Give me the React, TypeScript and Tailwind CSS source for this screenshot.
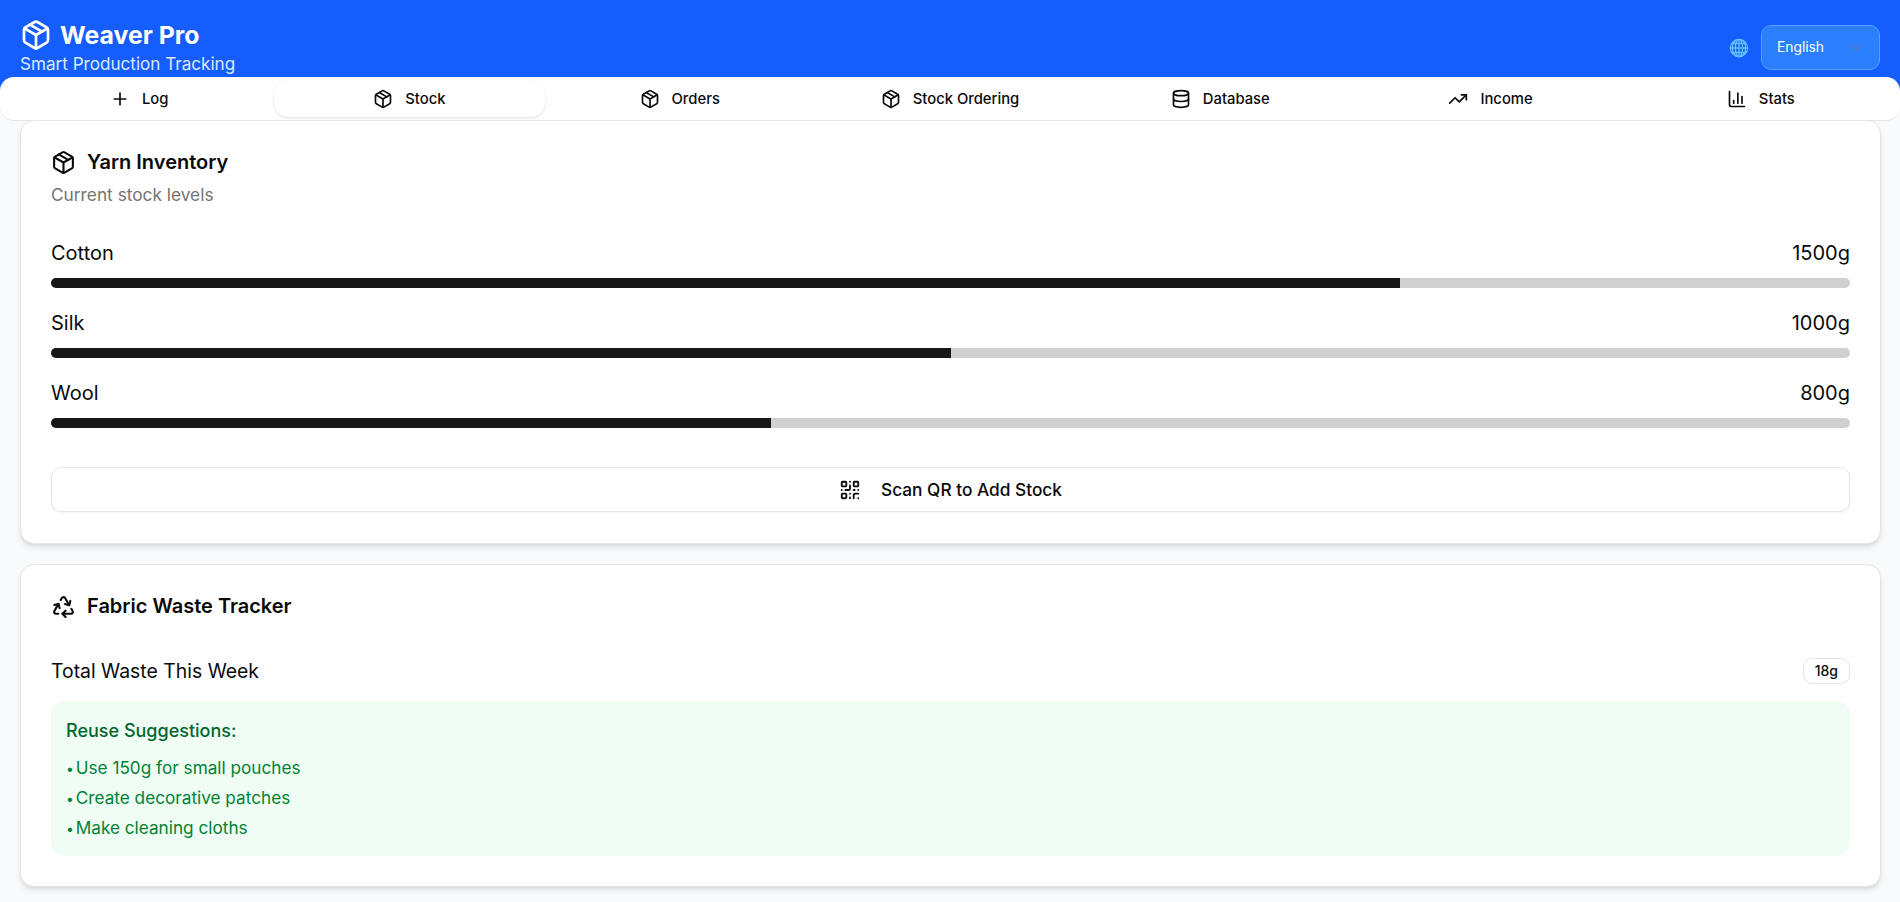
import { BarChart3, Database, ChevronDown, Package, Plus, QrCode, Recycle, TrendingUp } from 'lucide-react';

const tabs = [
  { label: 'Log', icon: Plus },
  { label: 'Stock', icon: Package, active: true },
  { label: 'Orders', icon: Package },
  { label: 'Stock Ordering', icon: Package },
  { label: 'Database', icon: Database },
  { label: 'Income', icon: TrendingUp },
  { label: 'Stats', icon: BarChart3 },
];

const yarns = [
  { name: 'Cotton', amount: '1500g', pct: 75 },
  { name: 'Silk', amount: '1000g', pct: 50 },
  { name: 'Wool', amount: '800g', pct: 40 },
];

const suggestions = ['Use 150g for small pouches', 'Create decorative patches', 'Make cleaning cloths'];

// denser grid than the lucide globe
const GlobeIcon = () => (
  <svg viewBox="0 0 20 20" className="h-5 w-5 text-[#60c0ff]" fill="none" stroke="currentColor" strokeWidth="1.3">
    <circle cx="10" cy="10" r="8.6" />
    <ellipse cx="10" cy="10" rx="3.6" ry="8.6" />
    <ellipse cx="10" cy="10" rx="6.6" ry="8.6" />
    <path d="M10 1.4v17.2M1.4 10h17.2M3 5.5h14M3 14.5h14" />
  </svg>
);

export default function App() {
  return (
    <div className="min-h-[902px] bg-[#f9fafb] font-['Inter',sans-serif] text-[#0a0a0a]">
      <header className="flex h-[91px] items-start justify-between bg-[#155dfc] px-5 pt-[19px] text-white">
        <div>
          <div className="flex items-center gap-2">
            <Package className="h-8 w-8" />
            <h1 className="text-[24.8px] leading-8 font-bold">Weaver Pro</h1>
          </div>
          <p className="mt-px text-[17.1px] leading-6 text-[#dbeafe]">Smart Production Tracking</p>
        </div>
        <div className="mt-[6px] flex items-center gap-3">
          <GlobeIcon />
          <div className="flex h-[45px] w-[119px] items-center justify-between rounded-[10px] border border-[#51a2ff] bg-[#2b7fff] px-[15px] text-[13.8px]">
            <span>English</span>
            <ChevronDown className="h-4 w-4 text-[#737373] opacity-60" />
          </div>
        </div>
      </header>

      <nav className="relative z-10 -mt-[14px] grid h-11 grid-cols-7 rounded-[14px] border-b border-[#e5e5e5] bg-white p-1">
        {tabs.map((tab) => (
          <div
            key={tab.label}
            className={
              tab.active
                ? 'flex h-9 items-center justify-center gap-3 rounded-[14px] bg-white text-[14.8px] font-medium shadow-sm'
                : 'flex h-9 items-center justify-center gap-3 rounded-[14px] text-[14.8px] font-medium'
            }
          >
            <tab.icon className="h-5 w-5" />
            {tab.label}
          </div>
        ))}
      </nav>

      <main className="-mt-px flex flex-col gap-5 pl-5 pr-[19px] pb-[15px]">
        <section className="rounded-[14px] border border-[#e5e5e5] bg-white px-[30px] pb-[31px] pt-[27px] shadow-md">
          <div className="flex items-center gap-[11px]">
            <Package className="h-[25px] w-[25px]" />
            <h2 className="text-xl leading-7 font-semibold">Yarn Inventory</h2>
          </div>
          <p className="mt-[7px] text-[17.3px] leading-6 text-[#737373]">Current stock levels</p>
          <div className="mt-8 flex flex-col gap-[21px]">
            {yarns.map((yarn) => (
              <div key={yarn.name}>
                <div className="flex justify-between text-xl leading-7">
                  <span>{yarn.name}</span>
                  <span>{yarn.amount}</span>
                </div>
                <div className="mt-[11px] h-[10px] overflow-hidden rounded-full bg-[#d0d0d0]">
                  <div className="h-full bg-[#171717]" style={{ width: `${yarn.pct}%` }} />
                </div>
              </div>
            ))}
          </div>
          <button className="mt-[39px] flex h-[45px] w-full items-center justify-center gap-5 rounded-[10px] border border-[#e5e5e5] bg-white text-[17.3px] font-medium shadow-xs">
            <QrCode className="h-[22px] w-[22px]" />
            Scan QR to Add Stock
          </button>
        </section>

        <section className="rounded-[14px] border border-[#e5e5e5] bg-white px-[30px] pb-[30px] pt-[27px] shadow-md">
          <div className="flex items-center gap-[11px]">
            <Recycle className="h-[25px] w-[25px]" />
            <h2 className="text-xl leading-7 font-semibold">Fabric Waste Tracker</h2>
          </div>
          <div className="mt-[37px] flex items-center justify-between">
            <span className="text-[19.4px] leading-7">Total Waste This Week</span>
            <span className="rounded-[9px] border border-[#e5e5e5] px-[11px] py-[3px] text-sm leading-[18px] font-medium">18g</span>
          </div>
          <div className="mt-4 rounded-[14px] bg-[#f0fdf4] py-4 pl-[15px] pr-4">
            <h3 className="text-lg leading-7 font-medium text-[#016630]">Reuse Suggestions:</h3>
            <ul className="mt-[11px] flex flex-col gap-[6px] text-[17.2px] leading-6 text-[#008236]">
              {suggestions.map((s) => (
                <li key={s}>
                  <span className="mr-[-3px] text-sm">•</span> {s}
                </li>
              ))}
            </ul>
          </div>
        </section>
      </main>
    </div>
  );
}
